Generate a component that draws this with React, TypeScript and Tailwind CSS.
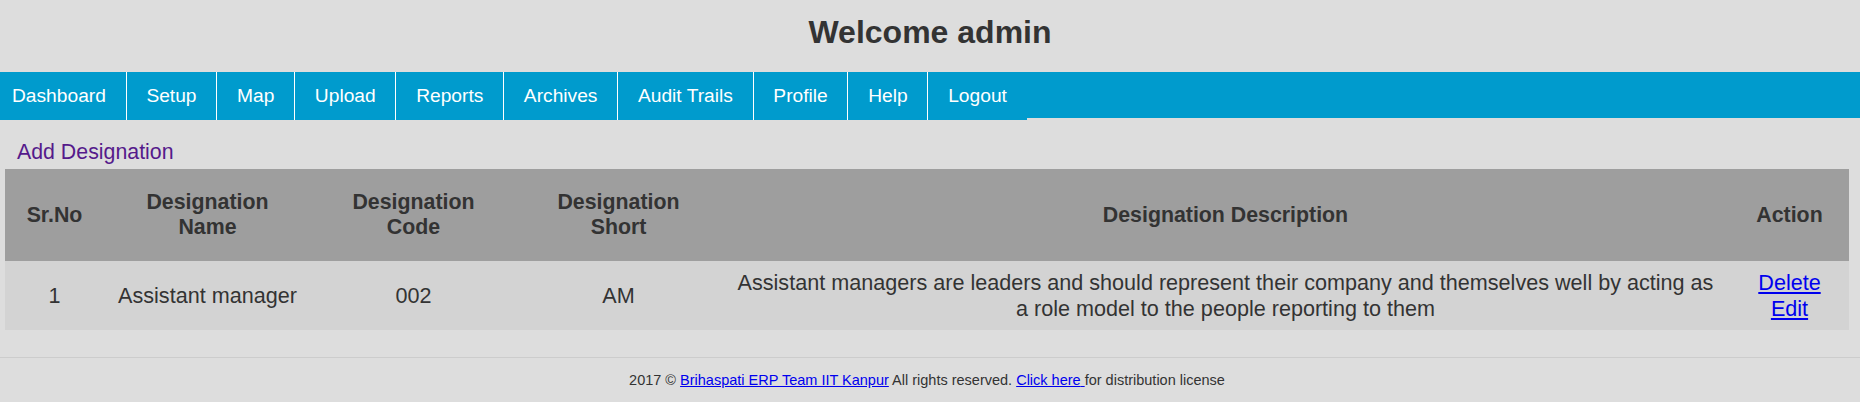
const navItems = [
  'Dashboard',
  'Setup',
  'Map',
  'Upload',
  'Reports',
  'Archives',
  'Audit Trails',
  'Profile',
  'Help',
  'Logout',
];

const columns = [
  { label: ['Sr.No'], width: 'w-[99px]' },
  { label: ['Designation', 'Name'], width: 'w-[207px]' },
  { label: ['Designation', 'Code'], width: 'w-[205px]' },
  { label: ['Designation', 'Short'], width: 'w-[205px]' },
  { label: ['Designation Description'], width: 'w-[1009px]' },
  { label: ['Action'], width: 'w-[119px]' },
];

export default function App() {
  return (
    <div className="min-h-screen bg-[#dddddd] font-['Liberation_Sans',Arial,sans-serif] text-[#333333]">
      <header className="h-[72px] pt-[14px] text-center">
        <h1 className="text-[32px] font-bold leading-[normal]">Welcome admin</h1>
      </header>

      <nav className="flex h-[46px] bg-[#009bcd]">
        {navItems.map((item, i) => (
          <a
            key={item}
            href="#"
            className={`flex h-[48px] items-center bg-[#009bcd] text-[19.2px] leading-[normal] text-white ${
              i === 0 ? 'pl-[12px] pr-[19.75px]' : 'border-l border-white px-[19.75px]'
            }`}
          >
            {item}
          </a>
        ))}
      </nav>

      <main className="px-[5px] pt-[22px]">
        <a href="#" className="block pl-[12px] text-[21.33px] leading-[normal] text-[#551a8b]">
          Add Designation
        </a>

        <table className="mt-[4px] w-[1844px] table-fixed text-center text-[21.33px] leading-[normal]">
          <colgroup>
            {columns.map((c, i) => (
              <col key={i} className={c.width} />
            ))}
          </colgroup>
          <thead>
            <tr className="h-[92px] bg-[#9e9e9e]">
              {columns.map((c, i) => (
                <th key={i} className="px-[4px] align-middle font-bold">
                  {c.label.map((l, j) => (
                    <div key={j}>{l}</div>
                  ))}
                </th>
              ))}
            </tr>
          </thead>
          <tbody className="text-[21.6px]">
            <tr className="h-[69px] bg-[#d3d3d3]">
              <td className="align-middle">1</td>
              <td className="align-middle">Assistant manager</td>
              <td className="align-middle">002</td>
              <td className="align-middle">AM</td>
              <td className="px-[2px] align-middle">
                <span className="whitespace-nowrap">
                  Assistant managers are leaders and should represent their company and themselves well by acting as
                </span>
                <br />
                a role model to the people reporting to them
              </td>
              <td className="align-middle">
                <a href="#" className="block text-[#0000ee] underline">
                  Delete
                </a>
                <a href="#" className="block text-[#0000ee] underline">
                  Edit
                </a>
              </td>
            </tr>
          </tbody>
        </table>
      </main>

      <footer className="mt-[27px] border-t border-[#cccccc] pr-[6px] pt-[14px] text-center text-[14.5px] leading-[normal]">
        2017 ©{' '}
        <a href="#" className="text-[#0000ee] underline">
          Brihaspati ERP Team IIT Kanpur
        </a>{' '}
        All rights reserved.{' '}
        <a href="#" className="text-[#0000ee] underline">
          Click here{' '}
        </a>
        for distribution license
      </footer>
    </div>
  );
}
